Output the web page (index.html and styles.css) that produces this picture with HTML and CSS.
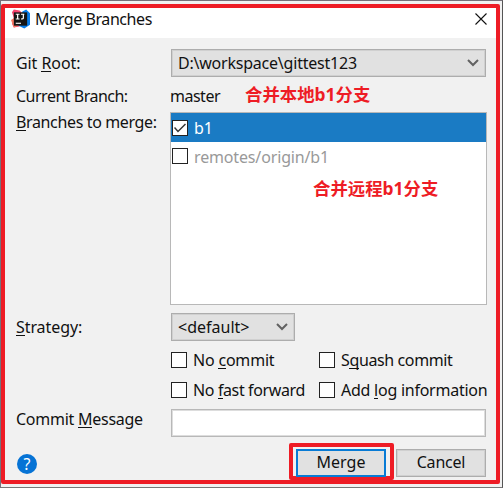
FILE: index.html
```
<!DOCTYPE html>
<html lang="en">
<head>
<meta charset="utf-8">
<title>Merge Branches</title>
<link rel="stylesheet" href="styles.css">
</head>
<body>
<div class="backdrop">
<main class="dialog">
  <header class="titlebar">
    <svg class="logo" viewBox="0 0 20 20">
      <path d="M1 3L3 0 9 1 12 4 9 18 3 19 1 15 3 9Z" fill="#f5456f"/>
      <path d="M0 11L5 8 8 17 3 19Z" fill="#f87a62"/>
      <path d="M12 2L16 0 20 4 20 16 14 20 8 17Z" fill="#087ce9"/>
      <rect x="3" y="3" width="14" height="14" fill="#151515"/>
      <path d="M5 5H9M7 5V10M5 10H9M10.5 5H14M13 5V9Q13 10 10.5 10" fill="none" stroke="#fff" stroke-width="1.3"/>
      <path d="M5 14.5H10.5" stroke="#fff" stroke-width="1.2"/>
    </svg>
    <h1 class="title">Merge Branches</h1>
    <svg class="close" viewBox="0 0 12 12"><path d="M.5.5L11.5 11.5M11.5.5L.5 11.5" stroke="#111" stroke-width="1.1"/></svg>
  </header>
  <div class="form">
    <div class="row root-row">
      <span class="label">Git <u>R</u>oot:</span>
      <div class="combo"><span class="path">D:\workspace\gittest123</span><svg class="chevron" viewBox="0 0 12 8"><path d="M1 1L6 6 11 1" fill="none" stroke="#626262" stroke-width="2"/></svg></div>
    </div>
    <div class="row branch-row">
      <span class="label current">Current Branch:</span>
      <span class="master">master</span><strong class="note">合并本地b1分支</strong>
    </div>
    <div class="row list-row">
      <span class="label branches"><u>B</u>ranches to merge:</span>
      <div class="list">
        <div class="item selected"><span class="box"><svg viewBox="0 0 12 12"><path d="M.5 5.5L4 9.5 11.5 2" fill="none" stroke="#333" stroke-width="1.5"/></svg></span><span class="b1">b1</span></div>
        <div class="item remote"><span class="box"></span><span class="origin">remotes/origin/b1</span></div>
        <strong class="note remote-note">合并远程b1分支</strong>
      </div>
    </div>
    <div class="row strategy-row">
      <span class="label"><u>S</u>trategy:</span>
      <div class="combo small"><span class="default">&lt;default&gt;</span><svg class="chevron" viewBox="0 0 12 8"><path d="M1 1L6 6 11 1" fill="none" stroke="#626262" stroke-width="2"/></svg></div>
    </div>
    <div class="checks">
      <div class="check"><span class="box"></span><span class="nocommit">No <u>c</u>ommit</span></div>
      <div class="check"><span class="box"></span><span class="squash">S<u>q</u>uash commit</span></div>
      <div class="check"><span class="box"></span><span class="noff">No <u>f</u>ast forward</span></div>
      <div class="check"><span class="box"></span><span class="addlog">Add <u>l</u>og information</span></div>
    </div>
    <div class="row message-row">
      <span class="label message">Commit <u>M</u>essage</span>
      <div class="input"></div>
    </div>
    <footer class="footer">
      <div class="help">?</div>
      <div class="highlight"><div class="button primary">Merge</div></div>
      <div class="button cancel">Cancel</div>
    </footer>
  </div>
</main>
</div>
</body>
</html>
```
FILE: styles.css
```
* { box-sizing: border-box; }
body { margin: 0; font: 16px/22px "Noto Sans", "Noto Sans CJK SC", sans-serif; color: #111; }
.backdrop { width: 503px; height: 488px; padding: 3px 2px 3px 0; background: #f1f1f1; border-top: 1px solid #77717a; border-left: 1px solid #77717a; border-right: 1px solid #555; border-bottom: 1px solid #777; overflow: hidden; }
.dialog { width: 499px; height: 480px; border: 4px solid #ee1c25; border-radius: 2px; background: #f1f1f1; }
.titlebar { height: 30px; background: #fff; display: flex; align-items: center; padding: 0 9px 8px 6px; }
.logo { width: 19px; height: 20px; flex: none; }
.title { font-size: 16px; font-weight: 400; margin: 0 auto 0 5px; line-height: 22px; letter-spacing: -.42px; }
.close { width: 12px; height: 12px; }
.form { padding: 11px 8px 0 11px; }
.row { display: flex; white-space: nowrap; }
.label { width: 154px; flex: none; letter-spacing: -.08px; }
.current { letter-spacing: -.5px; }
.branches { letter-spacing: -.36px; margin-top: -1px; }
u { text-decoration: none; box-shadow: 0 1px #111; display: inline-block; line-height: 16px; }
.root-row { height: 28px; align-items: center; }
.root-row .label, .strategy-row .label { width: 155px; }
.combo { width: 315px; height: 28px; border: 1px solid #adadad; box-shadow: inset 0 0 0 1px #d0d0d0; background: #e1e1e1; display: flex; align-items: center; justify-content: space-between; padding: 0 6px; flex: none; }
.path { letter-spacing: -.22px; }
.chevron { width: 12px; height: 8px; }
.branch-row { height: 35px; align-items: center; padding-top: 2px; }
.master { width: 75px; letter-spacing: -.5px; }
.note { color: #ee1c25; font: 700 17.4px/22px "Noto Sans", "Noto Sans CJK SC", sans-serif; }
.branch-row .note { margin-top: -3px; }
.list-row { height: 193px; }
.list { width: 317px; height: 193px; border: 1px solid #b8b8b8; background: #fff; flex: none; }
.item { height: 29px; display: flex; align-items: center; gap: 6px; padding-left: 1px; }
.selected { background: #1a7bc4; color: #fff; }
.remote { color: #999; }
.origin { letter-spacing: -.15px; }
.box { width: 16px; height: 16px; border: 1px solid #222; background: #fff; flex: none; display: flex; align-items: center; justify-content: center; }
.remote .box { margin-top: -2px; }
.box svg { width: 12px; height: 12px; }
.remote-note { display: block; margin: 6px 0 0 142px; }
.strategy-row { margin-top: 8px; height: 28px; align-items: center; }
.small { width: 124px; }
.checks { margin: 4px -10px 0 155px; display: grid; grid-template-columns: 148px 1fr; grid-auto-rows: 30px; }
.check { display: flex; align-items: center; gap: 6px; white-space: nowrap; }
.nocommit { letter-spacing: -.2px; }
.squash { letter-spacing: -.38px; }
.noff { letter-spacing: -.38px; }
.addlog { letter-spacing: -.25px; }
.message-row { height: 28px; margin-top: 4px; align-items: flex-start; }
.message { width: 155px; margin-top: -1px; letter-spacing: -.26px; }
.input { width: 315px; height: 28px; background: #fff; border: 1px solid #b8b8b8; box-shadow: inset 0 0 0 1px #ddd; flex: none; }
.footer { height: 37px; margin-top: 6px; display: flex; align-items: center; }
.help { width: 20px; height: 20px; border-radius: 50%; background: #0673d5; color: #fff; text-align: center; line-height: 20px; margin: 5px 252px 0 1px; flex: none; }
.highlight { width: 105px; height: 37px; border: 4px solid #ee1c25; border-radius: 2px; padding: 2px 3px; flex: none; }
.button { width: 90px; height: 28px; background: #e1e1e1; border: 1px solid #adadad; text-align: center; line-height: 25px; flex: none; }
.primary { border: 2px solid #087bd5; line-height: 22px; }
.cancel { margin: 3px 0 0 2px; letter-spacing: -.2px; box-shadow: inset 0 0 0 1px #d0d0d0; }
```
